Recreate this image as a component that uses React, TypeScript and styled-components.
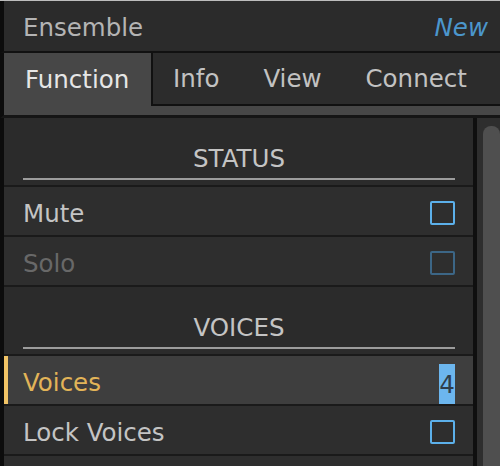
import styled, { createGlobalStyle } from 'styled-components';

const GlobalStyle = createGlobalStyle`
  body {
    margin: 0;
    background: #ffffff;
    font-family: 'DejaVu Sans', 'Open Sans', sans-serif;
  }
`;

type RowData = {
  label: string;
  kind: 'check' | 'value';
  disabled?: boolean;
  active?: boolean;
  value?: string;
};

type SectionData = {
  title: string;
  rows: Array<RowData>;
};

const sections: Array<SectionData> = [
  {
    title: 'STATUS',
    rows: [
      { label: 'Mute', kind: 'check' },
      { label: 'Solo', kind: 'check', disabled: true },
    ],
  },
  {
    title: 'VOICES',
    rows: [
      { label: 'Voices', kind: 'value', active: true, value: '4' },
      { label: 'Lock Voices', kind: 'check' },
    ],
  },
];

const tabs = ['Info', 'View', 'Connect'];

function App() {
  return (
    <>
      <GlobalStyle />
      <StyledFrame>
        <StyledHeader>
          <StyledTitle>Ensemble</StyledTitle>
          <StyledNew>New</StyledNew>
        </StyledHeader>
        <StyledTabBar>
          <StyledActiveTab>Function</StyledActiveTab>
          <StyledTabGroup>
            {tabs.map(tab => (
              <StyledTab key={tab}>{tab}</StyledTab>
            ))}
          </StyledTabGroup>
        </StyledTabBar>
        <StyledTabStrip />
        <StyledBody>
          <StyledContent>
            {sections.map(section => (
              <div key={section.title}>
                <StyledSection>
                  <StyledSectionTitle>{section.title}</StyledSectionTitle>
                  <StyledUnderline />
                </StyledSection>
                {section.rows.map(row => (
                  <StyledRow key={row.label} $active={row.active}>
                    <StyledLabel $disabled={row.disabled} $active={row.active}>
                      {row.label}
                    </StyledLabel>
                    {row.kind === 'check' ? (
                      <StyledCheckBox $disabled={row.disabled} />
                    ) : (
                      <StyledValue>{row.value}</StyledValue>
                    )}
                  </StyledRow>
                ))}
              </div>
            ))}
            <StyledRow />
          </StyledContent>
          <StyledScrollTrack>
            <StyledScrollThumb />
          </StyledScrollTrack>
        </StyledBody>
      </StyledFrame>
    </>
  );
}

const StyledFrame = styled.div`
  display: flex;
  flex-direction: column;

  width: 500px;
  height: 466px;
  overflow: hidden;
  border-top: 1px solid #bdbdbd;
  box-sizing: border-box;

  background: #141414;
  font-size: 24.5px;
`;

const StyledHeader = styled.div`
  display: flex;
  align-items: center;
  justify-content: space-between;

  flex: 0 0 52px;
  padding: 3px 12px 0 19px;
  box-sizing: border-box;
  border-left: 4px solid #0c0c0c;
  border-bottom: 2px solid #111111;

  background: #2b2b2b;
`;

const StyledTitle = styled.span`
  color: #b4b4b4;
`;

const StyledNew = styled.span`
  font-style: italic;
  color: #4b96cc;
`;

const StyledTabBar = styled.div`
  display: flex;

  flex: 0 0 53px;
  border-left: 4px solid #0c0c0c;
`;

const StyledActiveTab = styled.div`
  display: flex;
  align-items: center;

  width: 147px;
  padding-left: 21px;
  box-sizing: border-box;

  background: #474747;
  color: #e6e6e6;
`;

const StyledTabGroup = styled.div`
  display: flex;
  align-items: center;
  gap: 44px;

  flex: 1;
  padding-left: 20px;
  border-left: 2px solid #111111;
  border-bottom: 2px solid #111111;

  background: #2c2c2c;
`;

const StyledTab = styled.span`
  color: #c2c2c2;
`;

const StyledTabStrip = styled.div`
  flex: 0 0 9px;
  border-left: 4px solid #0c0c0c;
  border-bottom: 3px solid #151515;

  background: #474747;
`;

const StyledBody = styled.div`
  display: flex;

  flex: 1;
  min-height: 0;
`;

const StyledContent = styled.div`
  flex: 1;
  border-left: 4px solid #0c0c0c;
`;

const StyledSection = styled.div`
  display: flex;
  flex-direction: column;
  justify-content: flex-end;

  height: 69px;
  padding: 0 18px 5px 19px;
  box-sizing: border-box;
  border-bottom: 2px solid #1a1a1a;

  background: #2b2b2b;
`;

const StyledSectionTitle = styled.div`
  line-height: 30px;
  text-align: center;
  color: #c4c4c4;
`;

const StyledUnderline = styled.div`
  height: 2px;
  margin-top: 4px;

  background: #9c9c9c;
`;

const StyledRow = styled.div<{ $active?: boolean }>`
  display: flex;
  align-items: center;
  justify-content: space-between;
  position: relative;

  height: 44px;
  padding: 4px 18px 0 19px;
  border-bottom: 2px solid #1a1a1a;

  background: ${({ $active }) => ($active ? '#3e3e3e' : '#2e2e2e')};

  &::before {
    content: '';
    display: ${({ $active }) => ($active ? 'block' : 'none')};
    position: absolute;
    left: 0;
    top: 0;
    bottom: 0;
    width: 4px;
    background: #f2c466;
  }
`;

const StyledLabel = styled.span<{ $disabled?: boolean; $active?: boolean }>`
  color: ${({ $disabled, $active }) =>
    $active ? '#e2b458' : $disabled ? '#686868' : '#c4c4c4'};
`;

const StyledCheckBox = styled.span<{ $disabled?: boolean }>`
  width: 21px;
  height: 20px;
  border: 2px solid ${({ $disabled }) => ($disabled ? '#3c6686' : '#5cb0ea')};
  border-radius: 2px;
`;

const StyledValue = styled.span`
  display: flex;
  align-items: center;
  justify-content: center;

  width: 16px;
  height: 40px;
  margin-top: 4px;

  background: #6cb6ee;
  color: #2f3e4c;
  font-family: 'DejaVu Sans', sans-serif;
`;

const StyledScrollTrack = styled.div`
  display: flex;
  justify-content: flex-end;

  width: 23px;
  padding-top: 8px;
  border-left: 4px solid #0f0f0f;

  background: #2e2e2e;
`;

const StyledScrollThumb = styled.div`
  width: 17px;
  border-radius: 8px 8px 0 0;

  background: #4f4f4f;
`;

export default App;
